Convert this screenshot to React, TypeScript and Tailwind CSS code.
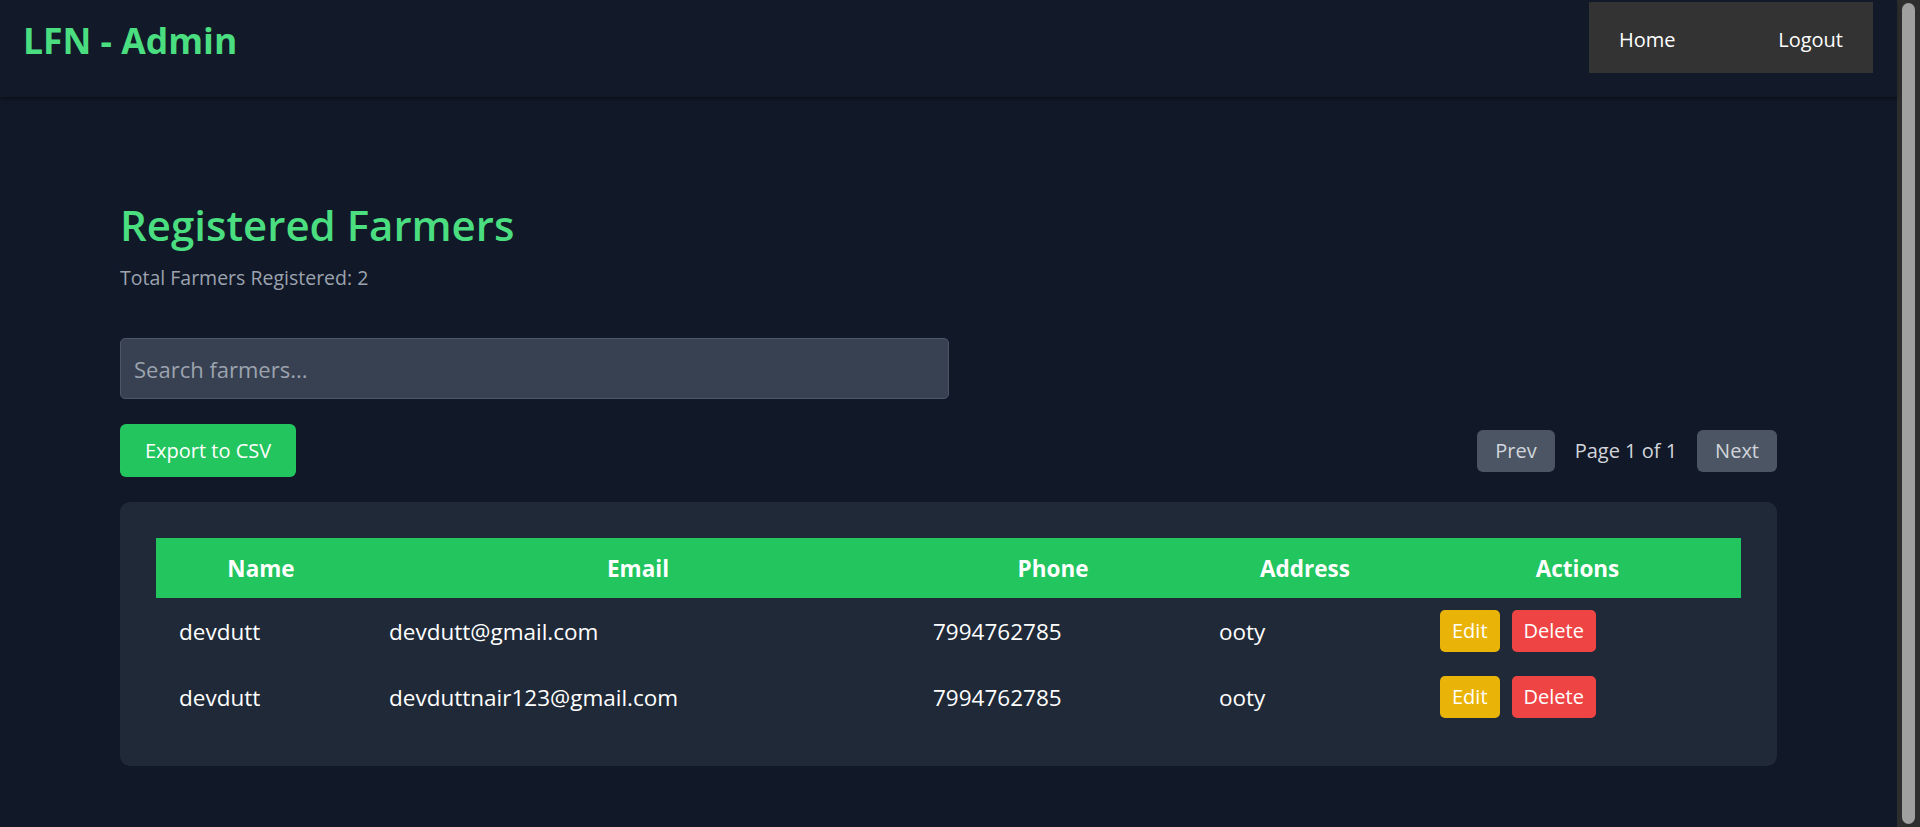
export default function App() {
  const farmers = [
    { name: "devdutt", email: "devdutt@gmail.com", phone: "7994762785", address: "ooty" },
    { name: "devdutt", email: "devduttnair123@gmail.com", phone: "7994762785", address: "ooty" },
  ];
  return (
    <div className="flex h-screen overflow-hidden bg-[#111827] font-['Open_Sans',sans-serif] text-white">
      <div className="min-w-0 flex-1">
        <header className="relative z-10 flex h-[97px] items-start justify-between bg-[#121928] pl-[23px] pr-[24px] pt-[2px] shadow-[0_2px_4px_rgba(0,0,0,0.35)]">
          <div className="flex h-[71px] items-center pt-[5px] text-[35.5px] font-bold leading-[45px] text-[#4ade80]">
            LFN - Admin
          </div>
          <nav className="flex h-[71px] w-[284px] items-center justify-between bg-[#333333] px-[30px] pt-[5px] text-[20px] leading-[30px] text-white">
            <a href="#">Home</a>
            <a href="#">Logout</a>
          </nav>
        </header>

        <main className="px-[120px] pb-[80px] pt-[103px]">
          <h1 className="text-[42px] font-semibold leading-[50px] text-[#4ade80]">Registered Farmers</h1>
          <p className="mt-[13px] text-[19.5px] leading-[30px] text-[#9ca3af]">Total Farmers Registered: 2</p>

          <input
            type="text"
            placeholder="Search farmers..."
            className="mt-[45px] block h-[61px] w-1/2 rounded-[5px] border border-[#4b5563] bg-[#374151] px-[13px] text-[22px] text-white outline-none placeholder:text-[#9ca3af]"
          />

          <div className="mt-[25px] flex h-[53px] items-center justify-between">
            <button className="h-[53px] rounded-[6px] bg-[#22c55e] px-[25px] text-[20px] leading-[30px] text-white">
              Export to CSV
            </button>
            <div className="flex items-center gap-[20px] text-[20px] leading-[30px]">
              <button className="h-[42px] rounded-[6px] bg-[#4b5563] px-[18px] text-[#d1d5db]">Prev</button>
              <span className="text-[#d1d5db]">Page 1 of 1</span>
              <button className="h-[42px] rounded-[6px] bg-[#4b5563] px-[18px] text-[#d1d5db]">Next</button>
            </div>
          </div>

          <div className="mt-[25px] rounded-[10px] bg-[#1f2937] p-[36px]">
            <table className="w-full table-fixed border-collapse text-[22.5px] leading-[35px]">
              <thead>
                <tr className="h-[60px] bg-[#22c55e]">
                  <th className="w-[210px] text-center font-bold text-white">Name</th>
                  <th className="w-[544px] text-center font-bold text-white">Email</th>
                  <th className="w-[286px] text-center font-bold text-white">Phone</th>
                  <th className="w-[218px] text-center font-bold text-white">Address</th>
                  <th className="text-center font-bold text-white">Actions</th>
                </tr>
              </thead>
              <tbody>
                {farmers.map((f, i) => (
                  <tr key={i} className="h-[66px]">
                    <td className="pl-[23px] text-white">{f.name}</td>
                    <td className="pl-[23px] text-white">{f.email}</td>
                    <td className="pl-[23px] text-white">{f.phone}</td>
                    <td className="pl-[23px] text-white">{f.address}</td>
                    <td className="pl-[26px]">
                      <div className="flex items-center gap-[12px]">
                        <button className="h-[42px] rounded-[5px] bg-[#eab308] px-[12px] text-[20px] leading-[30px] text-white">
                          Edit
                        </button>
                        <button className="h-[42px] rounded-[5px] bg-[#ef4444] px-[12px] text-[20px] leading-[30px] text-white">
                          Delete
                        </button>
                      </div>
                    </td>
                  </tr>
                ))}
              </tbody>
            </table>
          </div>
        </main>
      </div>
      <div className="flex h-full w-[23px] shrink-0 bg-[#2e2e2e] px-[5px] py-[3px]">
        <div className="h-full w-full rounded-full bg-[#a0a0a0]" />
      </div>
    </div>
  );
}
